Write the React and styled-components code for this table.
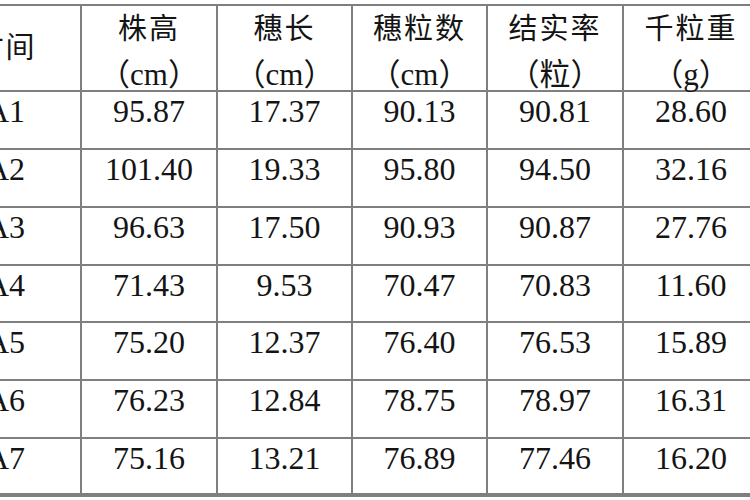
import React from "react";
import styled, { createGlobalStyle } from "styled-components";

const Global = createGlobalStyle`
  html, body { margin: 0; padding: 0; background: #ffffff; }
  #root { width: 750px; height: 500px; }
`;

const Frame = styled.div`
  width: 750px;
  height: 500px;
  overflow: hidden;
  background: #ffffff;
  padding-top: 4px;
  box-sizing: border-box;
`;

const Table = styled.table`
  border-collapse: collapse;
  table-layout: fixed;
  width: 829px;
  margin-left: -71px;
  font-family: "Liberation Serif", "Noto Sans CJK SC", serif;
  color: #141414;
`;

const HeadRow = styled.tr`
  height: 86px;
`;

const BodyRow = styled.tr`
  height: ${(p) => p.$h}px;
`;

const HeadCell = styled.th`
  border: 2px solid #7f7f7f;
  padding: ${(p) => (p.$single ? "0" : "5px 0 0 0")};
  vertical-align: ${(p) => (p.$single ? "middle" : "top")};
  text-align: center;
  font-weight: 400;
  font-size: 29px;
  line-height: ${(p) => (p.$single ? "42px" : "36px")};
  letter-spacing: 2px;
`;

const Unit = styled.span`
  display: block;
  margin-top: 14px;
  letter-spacing: 0;
  font-size: 31px;
  line-height: 28px;
`;

const Cell = styled.td`
  border: 2px solid #7f7f7f;
  border-bottom-width: ${(p) => (p.$last ? "4px" : "2px")};
  padding: 1px 0 0 0;
  vertical-align: top;
  text-align: center;
  font-size: 32px;
  line-height: 36px;
`;

const widths = [151, 136, 135, 135, 136, 136];

const headers = [
  ["株高", "（cm）"],
  ["穗长", "（cm）"],
  ["穗粒数", "（cm）"],
  ["结实率", "（粒）"],
  ["千粒重", "（g）"],
];

const rows = [
  ["A1", "95.87", "17.37", "90.13", "90.81", "28.60"],
  ["A2", "101.40", "19.33", "95.80", "94.50", "32.16"],
  ["A3", "96.63", "17.50", "90.93", "90.87", "27.76"],
  ["A4", "71.43", "9.53", "70.47", "70.83", "11.60"],
  ["A5", "75.20", "12.37", "76.40", "76.53", "15.89"],
  ["A6", "76.23", "12.84", "78.75", "78.97", "16.31"],
  ["A7", "75.16", "13.21", "76.89", "77.46", "16.20"],
];

const heights = [58, 58, 58, 57, 58, 58, 57];

export default function App() {
  return (
    <>
      <Global />
      <Frame>
        <Table>
          <colgroup>
            {widths.map((w, i) => (
              <col key={i} style={{ width: w }} />
            ))}
          </colgroup>
          <thead>
            <HeadRow>
              <HeadCell $single>时间</HeadCell>
              {headers.map(([a, b]) => (
                <HeadCell key={a}>
                  {a}
                  <Unit>{b}</Unit>
                </HeadCell>
              ))}
            </HeadRow>
          </thead>
          <tbody>
            {rows.map((r, i) => (
              <BodyRow key={r[0]} $h={heights[i]}>
                {r.map((v, j) => (
                  <Cell key={j} $last={i === rows.length - 1}>
                    {v}
                  </Cell>
                ))}
              </BodyRow>
            ))}
          </tbody>
        </Table>
      </Frame>
    </>
  );
}
